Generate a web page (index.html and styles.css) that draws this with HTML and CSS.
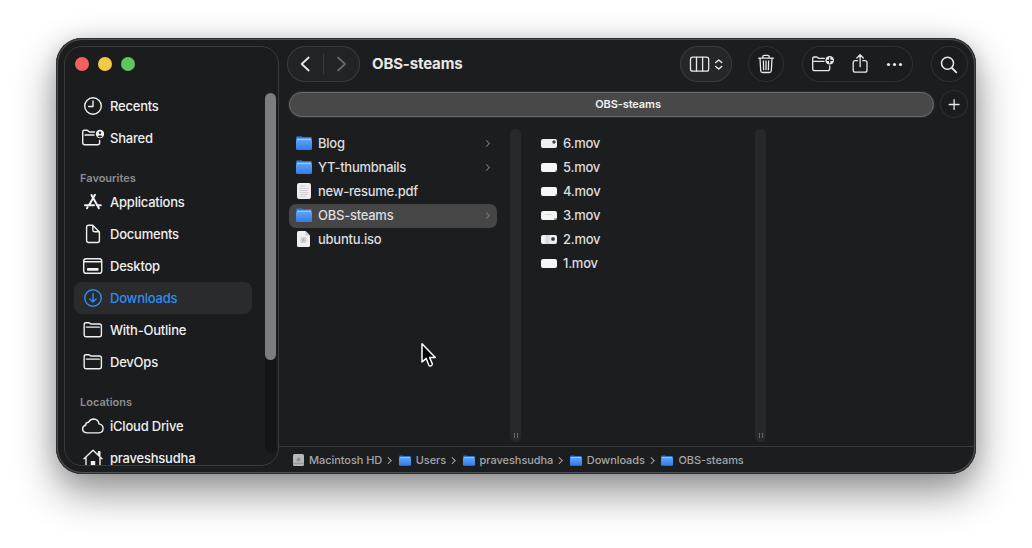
FILE: index.html
```
<!DOCTYPE html>
<html lang="en">
<head>
    <meta charset="UTF-8">
    <meta name="viewport" content="width=device-width, initial-scale=1.0">
    <title>OBS-steams</title>
    <link rel="stylesheet" href="styles.css">
</head>

<body>

    <!-- shared icons -->
    <svg class="sprite">
        <linearGradient id="blue" x1="0" y1="0" x2="0" y2="1">
            <stop offset="0" stop-color="#5ba2f6"/>
            <stop offset="1" stop-color="#347ce8"/>
        </linearGradient>
        <symbol id="folder" viewBox="0 0 16 14">
            <path d="M0 2Q0 .3 1.600 .3H5Q6 .3 6.600 1.100H14.500Q16 1.100 16 2.600V6H0z" fill="#2b72dd"/>
            <path d="M1 2.600H15V5H1z" fill="#b5d8fc"/>
            <rect y="3.800" width="16" height="10.200" rx="1.300" fill="url(#blue)"/>
        </symbol>
        <symbol id="outline" viewBox="0 0 20 18">
            <path d="M1.200 13.800V3.300Q1.200 1.700 2.800 1.700H5.500Q6.300 1.700 6.900 2.300L7.700 3H16.400Q18.400 3 18.400 5V13.800Q18.400 15.700 16.400 15.700H3.200Q1.200 15.700 1.200 13.800z"/>
            <path d="M3.300 6.100H16.400"/>
        </symbol>
    </svg>

    <div class="window">

        <!-- sidebar -->
        <div class="sidebar">
            <div class="lights">
                <span class="red"></span><span class="yellow"></span><span class="green"></span>
            </div>
            <div class="sidebar-body">
                <div class="places">
                    <div class="place">
                        <svg viewBox="0 0 24 20"><circle cx="13" cy="10" r="8.300"/><path d="M13 5V10.500H8.700"/></svg>
                        Recents
                    </div>
                    <div class="place">
                        <svg viewBox="0 0 24 20"><path d="M14.500 4H9.500L8.300 2.900Q7.700 2.300 6.900 2.300H4.300Q2.700 2.300 2.700 3.900V14.500Q2.700 16.700 4.900 16.700H17.600Q19.600 16.700 19.600 14.700V12.500M5 7H14"/><circle class="solid" cx="20" cy="6" r="4.200"/><circle class="dark" cx="20" cy="4.700" r="1.200"/><path class="dark" d="M17.600 8.600Q20 5.900 22.400 8.600L20 9.500z"/></svg>
                        Shared
                    </div>
                    <div class="heading">Favourites</div>
                    <div class="place">
                        <svg viewBox="0 0 24 20"><path class="thick" d="M11.500 3L13.200 6L18.900 16.200M15 2.800L9 13.300M5 13.300H14M17 13.300H20.800M7 16.200L7.600 15.300"/></svg>
                        Applications
                    </div>
                    <div class="place">
                        <svg viewBox="0 0 24 20"><path d="M8.500 1.300H12.700L19.400 8V16.600Q19.400 18.500 17.500 18.500H8.500Q6.600 18.500 6.600 16.600V3.200Q6.600 1.300 8.500 1.300zM12.800 1.500V6Q12.800 7.700 14.500 7.700H19.200"/></svg>
                        Documents
                    </div>
                    <div class="place">
                        <svg viewBox="0 0 24 20"><rect x="3.700" y="2.700" width="18" height="14.600" rx="2.400"/><path d="M4 5.700H21.500"/><rect class="solid" x="7" y="12" width="11.500" height="2.700" rx=".6"/></svg>
                        Desktop
                    </div>
                    <div class="place current">
                        <svg viewBox="0 0 24 20"><circle cx="13" cy="10" r="8.300"/><path d="M13 5.700V14M9.900 10.900L13 14L16.100 10.900"/></svg>
                        Downloads
                    </div>
                    <div class="place">
                        <svg viewBox="0 0 24 20"><use href="#outline" x="3" y="1" width="20" height="18"/></svg>
                        With-Outline
                    </div>
                    <div class="place">
                        <svg viewBox="0 0 24 20"><use href="#outline" x="3" y="1" width="20" height="18"/></svg>
                        DevOps
                    </div>
                    <div class="heading">Locations</div>
                    <div class="place">
                        <svg viewBox="0 0 24 20"><path d="M7 16.900Q2.600 16.600 2.600 12.800Q2.700 9.800 5.600 9.200Q5.700 6.200 8.600 6.200Q10.200 3 13.700 3Q18.300 3.200 19 7.900Q23.100 8.700 23.100 12.500Q22.900 16.600 18.700 16.900z"/></svg>
                        iCloud Drive
                    </div>
                    <div class="place">
                        <svg viewBox="0 0 24 20"><path d="M4 10.700L13 2.300L22 10.700M6 9.500V20H20V9.500M18.500 7V3.800H19.800V8"/><path class="solid" d="M10.800 13H15.200V20H10.800z"/></svg>
                        praveshsudha
                    </div>
                </div>
                <div class="scrollbar"><div class="thumb"></div></div>
            </div>
        </div>

        <!-- main pane -->
        <div class="main">
            <div class="toolbar">
                <div class="pill nav">
                    <svg width="36" height="36" viewBox="0 0 36 36"><path class="bold" d="M21.700 11.500L14.700 18L21.700 24.500"/></svg>
                    <span class="separator"></span>
                    <svg width="36" height="36" viewBox="0 0 36 36"><path class="bold dim" d="M14 11.500L21 18L14 24.500"/></svg>
                </div>
                <h1>OBS-steams</h1>
                <div class="pill view">
                    <svg width="52" height="36" viewBox="0 0 52 36"><rect x="10.500" y="11.200" width="18.200" height="14" rx="2.200"/><path d="M16.500 11.500V25M22.600 11.500V25"/><path class="medium" d="M35.700 16.500L38.700 14L41.700 16.500M35.700 20.500L38.700 23L41.700 20.500"/></svg>
                </div>
                <div class="pill trash">
                    <svg width="36" height="36" viewBox="0 0 36 36"><path d="M10.700 12.200H25.300M14.800 12V10.700Q14.800 9.300 16.200 9.300H19.800Q21.200 9.300 21.200 10.700V12M12 12.500L12.700 24.700Q12.900 26.500 14.700 26.500H21.300Q23.100 26.500 23.300 24.700L24 12.500M15.400 15L15.600 23.700M18 15V23.700M20.600 15L20.400 23.700"/></svg>
                </div>
                <div class="pill actions">
                    <svg width="111" height="36" viewBox="0 0 111 36">
                        <path d="M22.300 12.400H16.800L15.700 11.500Q15.100 11 14.400 11H12.300Q10.700 11 10.700 12.600V22.500Q10.700 24.700 12.900 24.700H25.500Q27.700 24.700 27.700 22.500V20M12 15.400H22"/>
                        <circle class="solid" cx="27.700" cy="14.300" r="4.300"/><path class="plus" d="M25.200 14.300H30.200M27.700 11.800V16.800"/>
                        <path d="M55.500 14.700H53.300Q51.200 14.700 51.200 16.800V24Q51.200 26.200 53.300 26.200H62.900Q65 26.200 65 24V16.800Q65 14.700 62.900 14.700H60.800M58.100 20.700V9M54.900 12L58.100 8.800L61.300 12"/>
                        <circle class="solid" cx="86.500" cy="18.500" r="1.600"/><circle class="solid" cx="92.500" cy="18.500" r="1.600"/><circle class="solid" cx="98.500" cy="18.500" r="1.600"/>
                    </svg>
                </div>
                <div class="pill search">
                    <svg width="37" height="36" viewBox="0 0 37 36"><circle class="medium" cx="16.500" cy="17.300" r="6"/><path class="bold" d="M21 22L25.300 26.300"/></svg>
                </div>
            </div>

            <div class="tabs">
                <div class="tab">OBS-steams</div>
                <div class="pill new-tab">
                    <svg width="28" height="28" viewBox="0 0 28 28"><path d="M9.200 14.500H19M14.100 9.600V19.400"/></svg>
                </div>
            </div>

            <div class="columns">
                <div class="column">
                    <div class="file"><svg class="icon"><use href="#folder"/></svg>Blog<span class="chevron"></span></div>
                    <div class="file"><svg class="icon"><use href="#folder"/></svg>YT-thumbnails<span class="chevron"></span></div>
                    <div class="file">
                        <svg class="page" viewBox="0 0 14 16"><rect width="14" height="16" rx="2.200" fill="#eee"/><path d="M3 3H8M3 5.500H11M3 7.500H10M3 9.500H11M3 11.500H10M3 13.500H9" stroke="#ccc" stroke-width=".8"/></svg>
                        new-resume.pdf
                    </div>
                    <div class="file selected"><svg class="icon"><use href="#folder"/></svg>OBS-steams<span class="chevron"></span></div>
                    <div class="file">
                        <svg class="page" viewBox="0 0 14 16"><path d="M1.500 0H8.500L13 4.500V14.500Q13 16 11.500 16H1.500Q0 16 0 14.500V1.500Q0 0 1.500 0z" fill="#f0f0f0"/><path d="M8.500 0V4.500H13z" fill="#c9c9c9"/><rect x="3.500" y="6" width="6" height="6" rx="1" fill="#d2d2d2"/><circle cx="6.500" cy="9" r="1.200" fill="#b0b0b0"/></svg>
                        ubuntu.iso
                    </div>
                </div>
                <div class="divider"></div>
                <div class="column second">
                    <div class="file"><span class="clip face"></span>6.mov</div>
                    <div class="file"><span class="clip"></span>5.mov</div>
                    <div class="file"><span class="clip"></span>4.mov</div>
                    <div class="file"><span class="clip lines"></span>3.mov</div>
                    <div class="file"><span class="clip photo"></span>2.mov</div>
                    <div class="file"><span class="clip plain"></span>1.mov</div>
                </div>
                <div class="divider"></div>
            </div>

            <div class="pathbar">
                <svg class="disk" viewBox="0 0 11 12"><rect width="11" height="12" rx="1.500" fill="#b9b9b9"/><path d="M.5 9.500H10.500" stroke="#999"/><circle cx="5.500" cy="5.500" r="2" fill="#8f8f8f"/></svg>
                <span class="crumb">Macintosh HD</span><i class="arrow"></i>
                <svg class="mini"><use href="#folder"/></svg><span class="crumb">Users</span><i class="arrow"></i>
                <svg class="mini"><use href="#folder"/></svg><span class="crumb">praveshsudha</span><i class="arrow"></i>
                <svg class="mini"><use href="#folder"/></svg><span class="crumb">Downloads</span><i class="arrow"></i>
                <svg class="mini"><use href="#folder"/></svg><span class="crumb">OBS-steams</span>
            </div>
        </div>
    </div>

    <svg class="cursor" viewBox="0 0 18 27"><path d="M2 1.800V20L6.200 16.400L8.800 23Q9.500 24.500 11 23.900Q12.800 23 12.200 21.600L9.600 15.500H15.300z"/></svg>

</body>
</html>
```
FILE: styles.css
```
*{
    margin: 0;
    padding: 0;
    box-sizing: border-box;
}
body{
    width: 1032px;
    height: 548px;
    padding: 38px 56px;
    overflow: hidden;
    background: #fff;
    font-family: Inter, "Liberation Sans", sans-serif;
    font-size: 13px;
    font-weight: 500;
    color: #e8e8e8;
}
svg{
    display: block;
    flex: none;
    fill: none;
    stroke: currentColor;
    stroke-width: 1.3;
    stroke-linecap: round;
    stroke-linejoin: round;
}
.sprite{
    position: absolute;
    width: 0;
    height: 0;
}
.solid{
    fill: currentColor;
    stroke: none;
}
.dark{
    fill: #1c1d1f;
    stroke: none;
}
.plus{
    stroke: #1c1d1f;
}
.thick{
    stroke-width: 2;
}
.medium{
    stroke-width: 1.5;
}
.bold{
    stroke-width: 1.8;
}
.dim{
    stroke: #666769;
}

.window{
    display: flex;
    width: 920px;
    height: 436px;
    border-radius: 26px;
    background: #1c1d1f;
    box-shadow: inset 0 0 0 1px #2c2d2f, inset 0 0 0 2px #505153, 0 18px 40px rgba(0,0,0,0.44), 0 0 20px rgba(0,0,0,0.1);
}

/* sidebar */
.sidebar{
    width: 215px;
    height: 420px;
    margin-top: 8px;
    margin-left: 8px;
    border: 1px solid #3a3b3d;
    border-radius: 18px;
    overflow: hidden;
    background: #1b1c1e;
}
.lights{
    display: flex;
    gap: 9px;
    height: 43px;
    padding: 10px 0 0 10px;
}
.lights span{
    width: 14px;
    height: 14px;
    border-radius: 50%;
}
.red{
    background: #f4605e;
}
.yellow{
    background: #f6c944;
}
.green{
    background: #5cc65a;
}
.sidebar-body{
    display: flex;
    justify-content: space-between;
}
.places{
    width: 187px;
    padding-left: 9px;
}
.place{
    display: flex;
    align-items: center;
    gap: 6px;
    width: 178px;
    height: 32px;
    padding-left: 6px;
    border-radius: 8px;
    color: #f0f0f0;
    letter-spacing: -0.22px;
}
.place svg{
    width: 24px;
    height: 20px;
    stroke-width: 1.4;
}
.current{
    background: #2a2b2d;
    color: #2d8df4;
}
.heading{
    height: 32px;
    padding: 17px 0 0 6px;
    font-size: 11px;
    font-weight: 600;
    line-height: 15px;
    color: #8c8d8f;
}
.scrollbar{
    width: 11px;
    height: 360px;
    margin: 3px 2px 0 0;
    border-radius: 6px;
    background: #141516;
}
.thumb{
    height: 267px;
    border-radius: 6px;
    background: #7d7d7e;
}

/* main pane */
.main{
    display: flex;
    flex-direction: column;
    flex: 1;
}
.toolbar{
    display: flex;
    align-items: center;
    padding: 8px 8px 0;
    height: 44px;
}
.pill{
    display: flex;
    align-items: center;
    justify-content: center;
    height: 36px;
    border-radius: 18px;
    background: #1b1c1e;
    box-shadow: inset 0 0 0 1px #2f3032;
}
.nav{
    width: 73px;
    background: #222325;
    box-shadow: inset 0 0 0 1px #3a3b3d;
}
.separator{
    width: 1px;
    height: 20px;
    background: #3a3b3d;
}
h1{
    margin-left: 12px;
    padding-bottom: 1px;
    font-size: 15px;
    font-weight: 700;
    letter-spacing: -0.15px;
}
.view{
    width: 52px;
    margin-left: auto;
    background: #252628;
    box-shadow: inset 0 0 0 1px #3a3b3d;
}
.trash{
    width: 36px;
    margin-left: 16px;
}
.actions{
    width: 111px;
    margin-left: 18px;
}
.search{
    width: 37px;
    margin-left: 18px;
}
.tabs{
    display: flex;
    align-items: center;
    gap: 6px;
    height: 28px;
    margin: 8px 8px 0 10px;
}
.tab{
    flex: 1;
    height: 25px;
    padding-left: 33px;
    border: 1px solid #6a6a6b;
    border-radius: 13px;
    background: #484849;
    box-shadow: 0 0 0 1px #2c2d2f;
    font-size: 11px;
    font-weight: 600;
    line-height: 23px;
    letter-spacing: -0.1px;
    text-align: center;
    color: #f2f2f2;
}
.new-tab{
    width: 28px;
    height: 28px;
}
.columns{
    display: flex;
    flex: 1;
    padding: 11px 0 4px 10px;
}
.column{
    width: 208px;
    margin: 3px 13px 0 0;
}
.second{
    width: 221px;
    margin-left: 13px;
    margin-right: 0;
}
.file{
    display: flex;
    align-items: center;
    gap: 6px;
    height: 24px;
    padding: 0 6px 2px 7px;
    border-radius: 7px;
    color: #dededf;
    letter-spacing: -0.25px;
}
.file svg, .pathbar svg{
    stroke: none;
}
.icon{
    width: 16px;
    height: 14px;
}
.page{
    width: 14px;
    height: 16px;
    margin: 0 1px;
}
.selected{
    background: #464647;
}
.chevron, .arrow{
    width: 5px;
    height: 5px;
    border: solid #747577;
    border-width: 1.3px 1.3px 0 0;
    transform: rotate(45deg);
}
.chevron{
    margin-left: auto;
    margin-right: 2px;
}
.clip{
    width: 16px;
    height: 9px;
    border-radius: 2px;
    background: linear-gradient(#bbb, #bbb) 14px 7px / 2px 2px no-repeat, #f6f6f6;
}
.face{
    background: radial-gradient(circle at 13px 3px, #333b4a 1px, transparent 2.2px), #eee;
}
.lines{
    background: linear-gradient(#dcdcd6, #dcdcd6) 4px 3px / 7px 1px no-repeat, linear-gradient(#aaa, #aaa) 13px 7px / 3px 2px no-repeat, #f4f4f4;
}
.photo{
    background: radial-gradient(circle at 12px 4px, #26364c 1.2px, transparent 2.5px), linear-gradient(90deg, #f4f4f4 3px, #ccd8df 6px, #eee 10px);
}
.plain{
    background: #f6f6f6;
}
.divider{
    display: flex;
    align-items: flex-end;
    justify-content: center;
    gap: 2px;
    width: 11px;
    height: 313px;
    padding-bottom: 4px;
    border-radius: 5px;
    background: #272829;
}
.divider::before, .divider::after{
    content: "";
    width: 1px;
    height: 5px;
    background: #68696b;
}

/* path bar */
.pathbar{
    display: flex;
    align-items: center;
    height: 28px;
    margin-right: 1px;
    padding: 0 0 1px 14px;
    border-top: 1px solid #38393b;
    font-size: 11px;
    letter-spacing: -0.06px;
    color: #a5a6a8;
}
.disk{
    width: 11px;
    height: 12px;
    margin-right: 5px;
}
.mini{
    width: 12px;
    height: 11px;
    margin-right: 5px;
}
.arrow{
    width: 4.5px;
    height: 4.5px;
    margin: 0 8px 0 4px;
    border-color: #a5a6a8;
}

/* lies over the window */
.cursor{
    position: absolute;
    left: 420px;
    top: 342px;
    width: 18px;
    height: 27px;
    fill: #000;
    stroke: #fff;
    stroke-width: 1.5;
}
```
